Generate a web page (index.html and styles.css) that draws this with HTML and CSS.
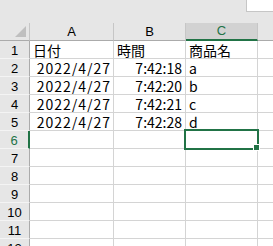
FILE: index.html
```html
<!DOCTYPE html>
<html lang="ja">
<head>
    <meta charset="UTF-8">
    <title>Sheet1</title>
    <link rel="stylesheet" href="styles.css">
</head>
<body>
    <div class="toolbar">
        <div class="namebox"></div>
    </div>
    <div class="sheet">
        <div class="corner"><span class="tri"></span></div>
        <div class="colhead">A</div>
        <div class="colhead">B</div>
        <div class="colhead sel">C</div>
        <div class="colhead rest"></div>

        <div class="rowhead">1</div>
        <div class="cell">日付</div>
        <div class="cell">時間</div>
        <div class="cell">商品名</div>
        <div class="cell rest"></div>

        <div class="rowhead">2</div>
        <div class="cell num date">2022/4/27</div>
        <div class="cell num">7:42:18</div>
        <div class="cell">a</div>
        <div class="cell rest"></div>

        <div class="rowhead">3</div>
        <div class="cell num date">2022/4/27</div>
        <div class="cell num">7:42:20</div>
        <div class="cell">b</div>
        <div class="cell rest"></div>

        <div class="rowhead">4</div>
        <div class="cell num date">2022/4/27</div>
        <div class="cell num">7:42:21</div>
        <div class="cell">c</div>
        <div class="cell rest"></div>

        <div class="rowhead">5</div>
        <div class="cell num date">2022/4/27</div>
        <div class="cell num">7:42:28</div>
        <div class="cell">d</div>
        <div class="cell rest"></div>

        <div class="rowhead sel">6</div>
        <div class="cell"></div>
        <div class="cell"></div>
        <div class="cell active"><span class="handle"></span></div>
        <div class="cell rest"></div>

        <div class="rowhead">7</div>
        <div class="cell"></div><div class="cell"></div><div class="cell"></div><div class="cell rest"></div>
        <div class="rowhead">8</div>
        <div class="cell"></div><div class="cell"></div><div class="cell"></div><div class="cell rest"></div>
        <div class="rowhead">9</div>
        <div class="cell"></div><div class="cell"></div><div class="cell"></div><div class="cell rest"></div>
        <div class="rowhead">10</div>
        <div class="cell"></div><div class="cell"></div><div class="cell"></div><div class="cell rest"></div>
        <div class="rowhead">11</div>
        <div class="cell"></div><div class="cell"></div><div class="cell"></div><div class="cell rest"></div>
        <div class="rowhead">12</div>
        <div class="cell"></div><div class="cell"></div><div class="cell"></div><div class="cell rest"></div>
    </div>
</body>
</html>
```

FILE: styles.css
```css
body {
    margin: 0;
    width: 273px;
    height: 246px;
    overflow: hidden;
    background: #ffffff;
    font-family: "Noto Sans CJK JP", "Liberation Sans", sans-serif;
    font-size: 14px;
    color: #000000;
}
.toolbar {
    height: 23px;
    background: #e6e6e6;
    position: relative;
}
.namebox {
    position: absolute;
    right: 0;
    top: 0;
    width: 26px;
    height: 11px;
    background: #ffffff;
    border-left: 1px solid #c6c6c6;
    border-bottom: 1px solid #c6c6c6;
}
.sheet {
    display: grid;
    grid-template-columns: 30px 84px 72px 72px 15px;
    grid-auto-rows: 18px;
}
.corner {
    background: #e6e6e6;
    border-right: 1px solid #c6c6c6;
    border-bottom: 1px solid #ababab;
    position: relative;
}
.tri {
    position: absolute;
    right: 3px;
    bottom: 3px;
    width: 0;
    height: 0;
    border-left: 11px solid transparent;
    border-bottom: 11px solid #bfbfbf;
}
.colhead {
    background: #e6e6e6;
    border-right: 1px solid #c6c6c6;
    border-bottom: 1px solid #ababab;
    text-align: center;
    font-family: "Liberation Sans", sans-serif;
    font-size: 13px;
    line-height: 17px;
}
.colhead.sel {
    background: #d2d2d2;
    color: #217346;
    border-bottom: 2px solid #217346;
    line-height: 16px;
}
.colhead.rest {
    border-right: none;
}
.rowhead {
    background: #e6e6e6;
    border-right: 1px solid #ababab;
    border-bottom: 1px solid #f4f4f4;
    text-align: center;
    font-family: "Liberation Sans", sans-serif;
    font-size: 13px;
    line-height: 19px;
}
.rowhead.sel {
    color: #217346;
    border-right: 2px solid #217346;
}
.cell {
    border-right: 1px solid #d4d4d4;
    border-bottom: 1px solid #d4d4d4;
    padding: 0 3px;
    line-height: 17px;
    padding-top: 1px;
    white-space: nowrap;
    overflow: hidden;
}
.cell.num {
    text-align: right;
}
.cell.date {
    letter-spacing: 1px;
    padding-right: 2px;
}
.cell.rest {
    border-right: none;
}
.cell.active {
    position: relative;
    overflow: visible;
}
.cell.active::after {
    content: "";
    position: absolute;
    left: -2px;
    top: -2px;
    right: -2px;
    bottom: -2px;
    border: 2px solid #217346;
}
.handle {
    position: absolute;
    right: -3px;
    bottom: -3px;
    width: 5px;
    height: 5px;
    background: #217346;
    border: 1px solid #ffffff;
    z-index: 1;
}
```
